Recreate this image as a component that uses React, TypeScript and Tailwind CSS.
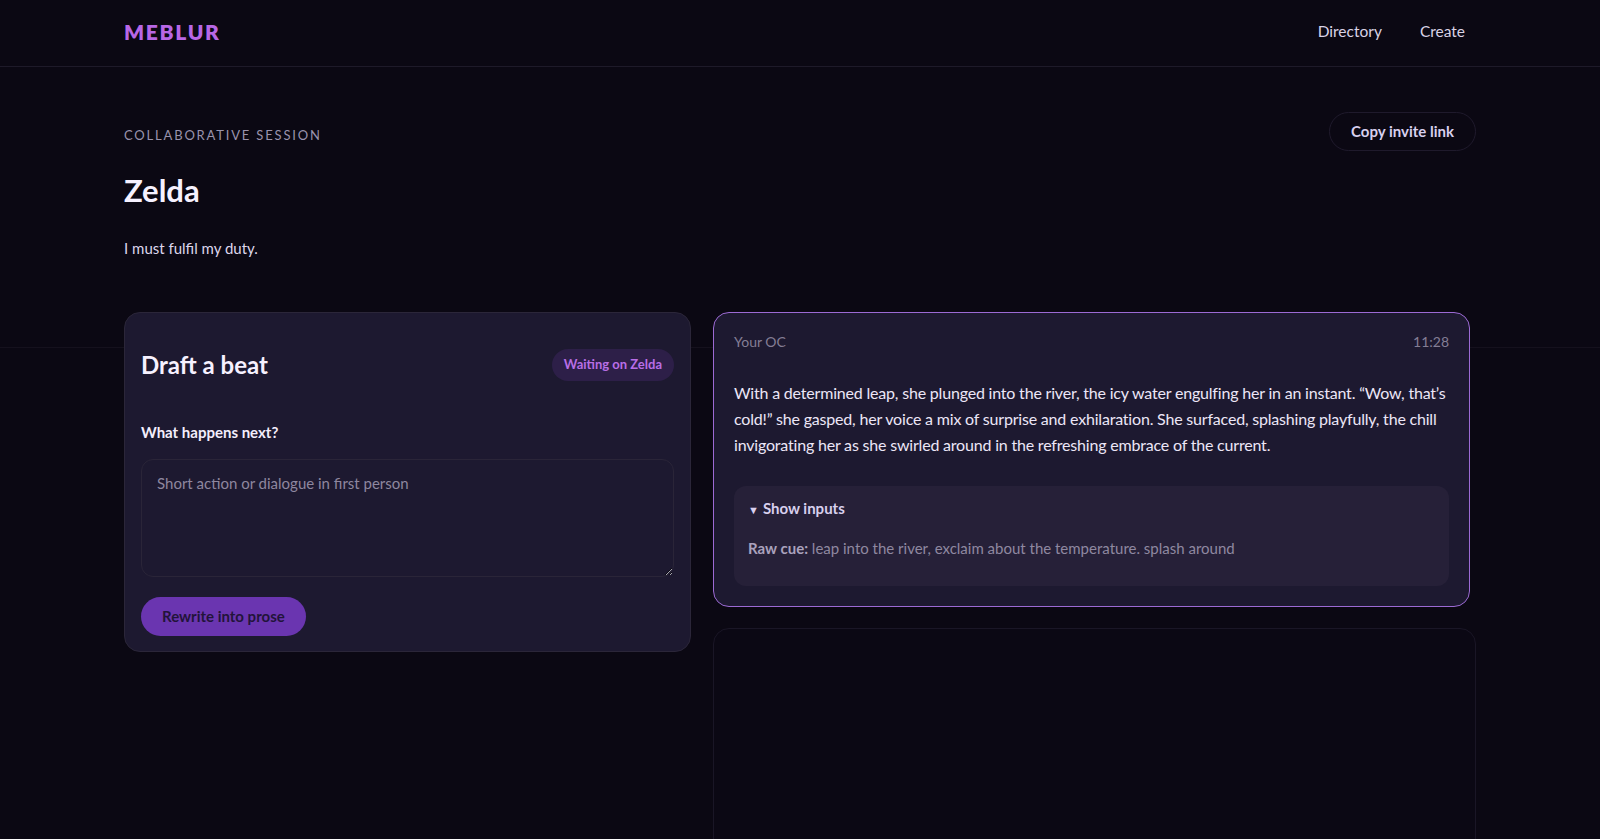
import React, { useState } from 'react';

export default function App() {
  const [beat, setBeat] = useState('');

  return (
    <div className="relative h-screen overflow-hidden bg-[#0b0813] text-[#ece6f7] font-['Lato','Noto_Sans',sans-serif]">
      {/* faint guide line behind the cards */}
      <div className="pointer-events-none absolute left-0 right-0 top-[347px] h-px bg-[#15111d]" />

      {/* HEADER */}
      <header className="relative border-b border-[#1e1a29]">
        <div className="mx-auto flex h-[66px] w-[1352px] items-center justify-between pb-[3px]">
          <span className="text-[21px] font-extrabold tracking-[0.08em] text-[#b867e6]">MEBLUR</span>
          <nav className="flex items-center gap-[38px] text-[15.5px] text-[#d9d3e6]">
            <a href="#">Directory</a>
            <a href="#" className="mr-[11px]">Create</a>
          </nav>
        </div>
      </header>

      <main className="relative mx-auto w-[1352px]">
        {/* SESSION HEADER */}
        <div className="flex items-start justify-between">
          <div className="pt-[59px]">
            <p className="text-[13px] uppercase tracking-[0.14em] text-[#9a93ad]">Collaborative session</p>
            <h1 className="mt-[29px] text-[31px] font-bold leading-none text-[#f6f1ff]">Zelda</h1>
            <p className="mt-[31px] text-[15px] text-[#ddd6ec]">I must fulfil my duty.</p>
          </div>
          <button className="mt-[45px] h-[39px] rounded-full border border-[#1f1a2c] px-[21px] text-[15px] font-bold text-[#d8d0ee]">
            Copy invite link
          </button>
        </div>

        {/* BOARD */}
        <div className="mt-[53px] grid grid-cols-[567px_1fr] items-start gap-[22px]">
          {/* DRAFT CARD */}
          <section className="rounded-2xl border border-[#2b2639] bg-[#1d1930] px-4 pb-[15px] pt-[36px]">
            <div className="flex items-center justify-between">
              <h2 className="text-[24px] font-bold leading-7 text-[#f6f1ff]">Draft a beat</h2>
              <span className="rounded-full bg-[#2d1f48] px-3 py-[6px] text-[13px] font-bold text-[#b86ee6]">
                Waiting on Zelda
              </span>
            </div>

            <label className="mt-[40px] block text-[15px] font-bold text-[#f3eefc]">What happens next?</label>
            <textarea
              value={beat}
              onChange={(e) => setBeat(e.target.value)}
              placeholder="Short action or dialogue in first person"
              className="mt-[16px] block h-[118px] w-full rounded-xl border border-[#2a2538] bg-[#1d1930] px-[15px] py-[12px] text-[15px] text-[#ece6f7] placeholder:text-[#8e879f] focus:outline-none"
            />

            <button className="mt-[20px] h-[39px] rounded-full bg-[#6a35b0] px-[21px] text-[15px] font-bold text-[#22143a]">
              Rewrite into prose
            </button>
          </section>

          {/* STORY COLUMN */}
          <div className="flex flex-col gap-[21px]">
            <article className="mr-[6px] rounded-2xl border border-[#9c6ad4] bg-[#1d1930] p-5">
              <div className="-mt-px flex items-center justify-between text-[14px] leading-5 text-[#847e95]">
                <span>Your OC</span>
                <span>11:28</span>
              </div>
              <p className="mt-[28px] text-[16px] leading-[26px] tracking-[-0.012em] text-[#ece6f7]">
                With a determined leap, she plunged into the river, the icy water engulfing her in an instant. “Wow, that’s cold!” she gasped, her voice a mix of surprise and exhilaration. She surfaced, splashing playfully, the chill invigorating her as she swirled around in the refreshing embrace of the current.
              </p>
              <details open className="mt-[28px] rounded-xl bg-[#262038] px-[14px] pb-[28px] pt-[12px]">
                <summary className="cursor-pointer list-none text-[15px] font-bold leading-5 text-[#d8d0ee]">
                  <span className="mr-[4px] inline-block align-middle text-[11px]">▼</span>Show inputs
                </summary>
                <p className="mt-[18px] text-[15px] leading-5 text-[#8f88a0]">
                  <span className="font-bold text-[#aaa2bd]">Raw cue:</span> leap into the river, exclaim about the temperature. splash around
                </p>
              </details>
            </article>

            <div className="h-[260px] rounded-2xl border border-[#1a1626] bg-[#0b0814]" />
          </div>
        </div>
      </main>
    </div>
  );
}
